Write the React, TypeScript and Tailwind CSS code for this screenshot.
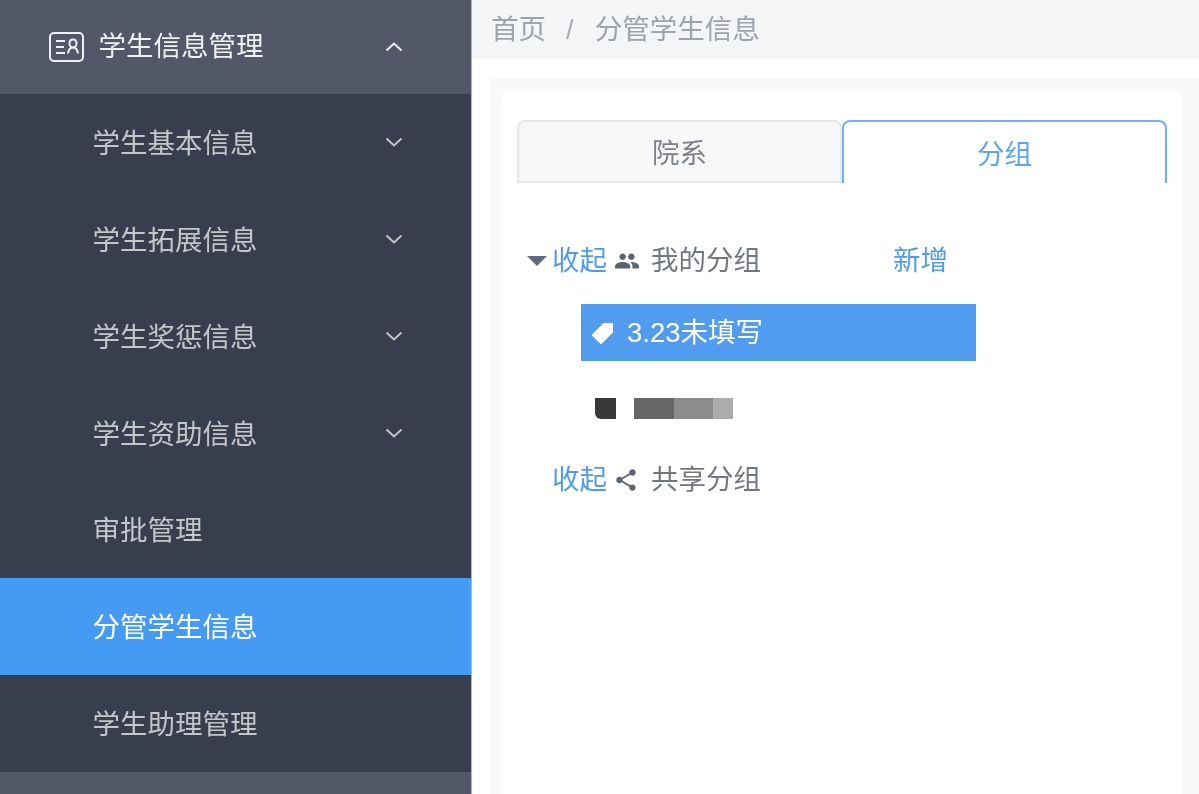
import React from "react";
import { MdPeople, MdShare } from "react-icons/md";

const font = "font-['Liberation_Sans','Noto_Sans_CJK_SC',sans-serif]";

function Chevron({ up }: { up?: boolean }) {
  return (
    <svg width="18" height="12" viewBox="0 0 18 12" fill="none" stroke="currentColor" strokeWidth="2" className="shrink-0">
      <path d={up ? "M1.5 9.5 9 2.5l7.5 7" : "M1.5 2.5 9 9.5l7.5-7"} />
    </svg>
  );
}

function SubItem({ label, chevron, active }: { label: string; chevron?: boolean; active?: boolean }) {
  return (
    <div
      className={`flex h-[96.8px] items-center justify-between pl-[92.5px] pr-[68px] ${
        active ? "bg-[#459af4] text-white" : "text-[#c4c6cb]"
      }`}
    >
      <span className="pt-[3px]">{label}</span>
      {chevron && (
        <span className="text-[#c4c6cb]">
          <Chevron />
        </span>
      )}
    </div>
  );
}

function CardIcon() {
  return (
    <svg width="35" height="30" viewBox="0 0 35 30" fill="none" stroke="#f0f1f3" strokeWidth="2" className="shrink-0">
      <rect x="1" y="1" width="33" height="28" rx="4" />
      <path d="M7 9h9M7 15h8M7 21h9" />
      <path d="M24 7.500c2 0 3.500 1.500 3.500 3.800S26 15.500 24 15.500s-3.500-1.900-3.500-4.200S22 7.500 24 7.500Z" />
      <path d="M19 21.500c.5-4 2.500-6 5-6s4.500 2 5 6" />
    </svg>
  );
}

function TagIcon() {
  return (
    <svg width="24" height="24" viewBox="0 0 24 24" className="shrink-0">
      <path
        fill="#ffffff"
        stroke="#ffffff"
        strokeWidth="2"
        strokeLinejoin="round"
        fillRule="evenodd"
        d="M13 3h8v8L10 22l-8-8L13 3Zm4 2.500a1.500 1.500 0 1 0 0 3 1.500 1.500 0 0 0 0-3Z"
      />
    </svg>
  );
}

export default function App() {
  return (
    <div className={`flex h-[794px] w-[1199px] overflow-hidden bg-white text-[27.5px] leading-none blur-[0.5px] ${font}`}>
      <aside className="flex h-full w-[472px] shrink-0 flex-col border-r border-[#b4b6bb] bg-[#393e4e]">
        <div className="flex h-[94px] shrink-0 items-center justify-between bg-[#535869] pl-[49px] pr-[68px] text-[#f0f1f3]">
          <div className="flex items-center gap-[14.5px]">
            <CardIcon />
            <span>学生信息管理</span>
          </div>
          <Chevron up />
        </div>
        <SubItem label="学生基本信息" chevron />
        <SubItem label="学生拓展信息" chevron />
        <SubItem label="学生奖惩信息" chevron />
        <SubItem label="学生资助信息" chevron />
        <SubItem label="审批管理" />
        <SubItem label="分管学生信息" active />
        <SubItem label="学生助理管理" />
        <div className="flex-1 bg-[#535869]" />
      </aside>

      <main className="flex min-w-0 flex-1 flex-col">
        <div className="flex h-[59px] shrink-0 items-center bg-[#f4f5f7] pl-[19px] text-[#9ca3aa]">
          <span>首页</span>
          <span className="ml-[20px] mr-[21px] text-[#a5abb1]">/</span>
          <span>分管学生信息</span>
        </div>
        <div className="mt-[19px] ml-[18px] flex-1 bg-[#f9f9f9] pl-[11px] pr-[17px] pt-[11px]">
          <div className="h-full rounded-t-[10px] bg-white px-[16px] pt-[31px]">
            <div className="flex h-[63px] w-[650px]">
              <div className="flex flex-1 items-center justify-center rounded-t-[8px] border-2 border-[#e4e7ed] bg-[#f7f7f7] pt-[4px] text-[#7c8188]">
                院系
              </div>
              <div className="flex flex-1 items-center justify-center rounded-t-[8px] border-2 border-b-0 border-[#6fb1f6] bg-white pt-[4px] text-[#5ba5f3]">
                分组
              </div>
            </div>

            <div className="mt-[49px] flex h-[57px] items-center pl-[10px]">
              <div className="h-0 w-0 border-x-[10px] border-t-[10px] border-x-transparent border-t-[#5f6b7a]" />
              <span className="ml-[5px] text-[#4e9cf0]">收起</span>
              <MdPeople className="ml-[7px] text-[#5b6470]" size={26} />
              <span className="ml-[11px] text-[#72777e]">我的分组</span>
              <span className="ml-[132px] text-[#4e9cf0]">新增</span>
            </div>

            <div className="ml-[64px] mt-[15px] flex h-[57px] w-[395px] items-center bg-[#529cef] pl-[10px] text-white">
              <TagIcon />
              <span className="ml-[12px] pt-[1px]">3.23未填写</span>
            </div>

            <div className="ml-[78px] mt-[37px] flex h-[21px] items-stretch">
              <div className="w-[21px] rounded-bl-[6px] bg-[#383838]" />
              <div className="ml-[18px] w-[40px] bg-[#666666]" />
              <div className="w-[39px] bg-[#8c8c8c]" />
              <div className="w-[20px] bg-[#acacac]" />
            </div>

            <div className="mt-[32px] flex h-[57px] items-center pl-[35px]">
              <span className="text-[#4e9cf0]">收起</span>
              <MdShare className="ml-[6px] text-[#5b6470]" size={26} />
              <span className="ml-[12px] text-[#72777e]">共享分组</span>
            </div>
          </div>
        </div>
      </main>
    </div>
  );
}
